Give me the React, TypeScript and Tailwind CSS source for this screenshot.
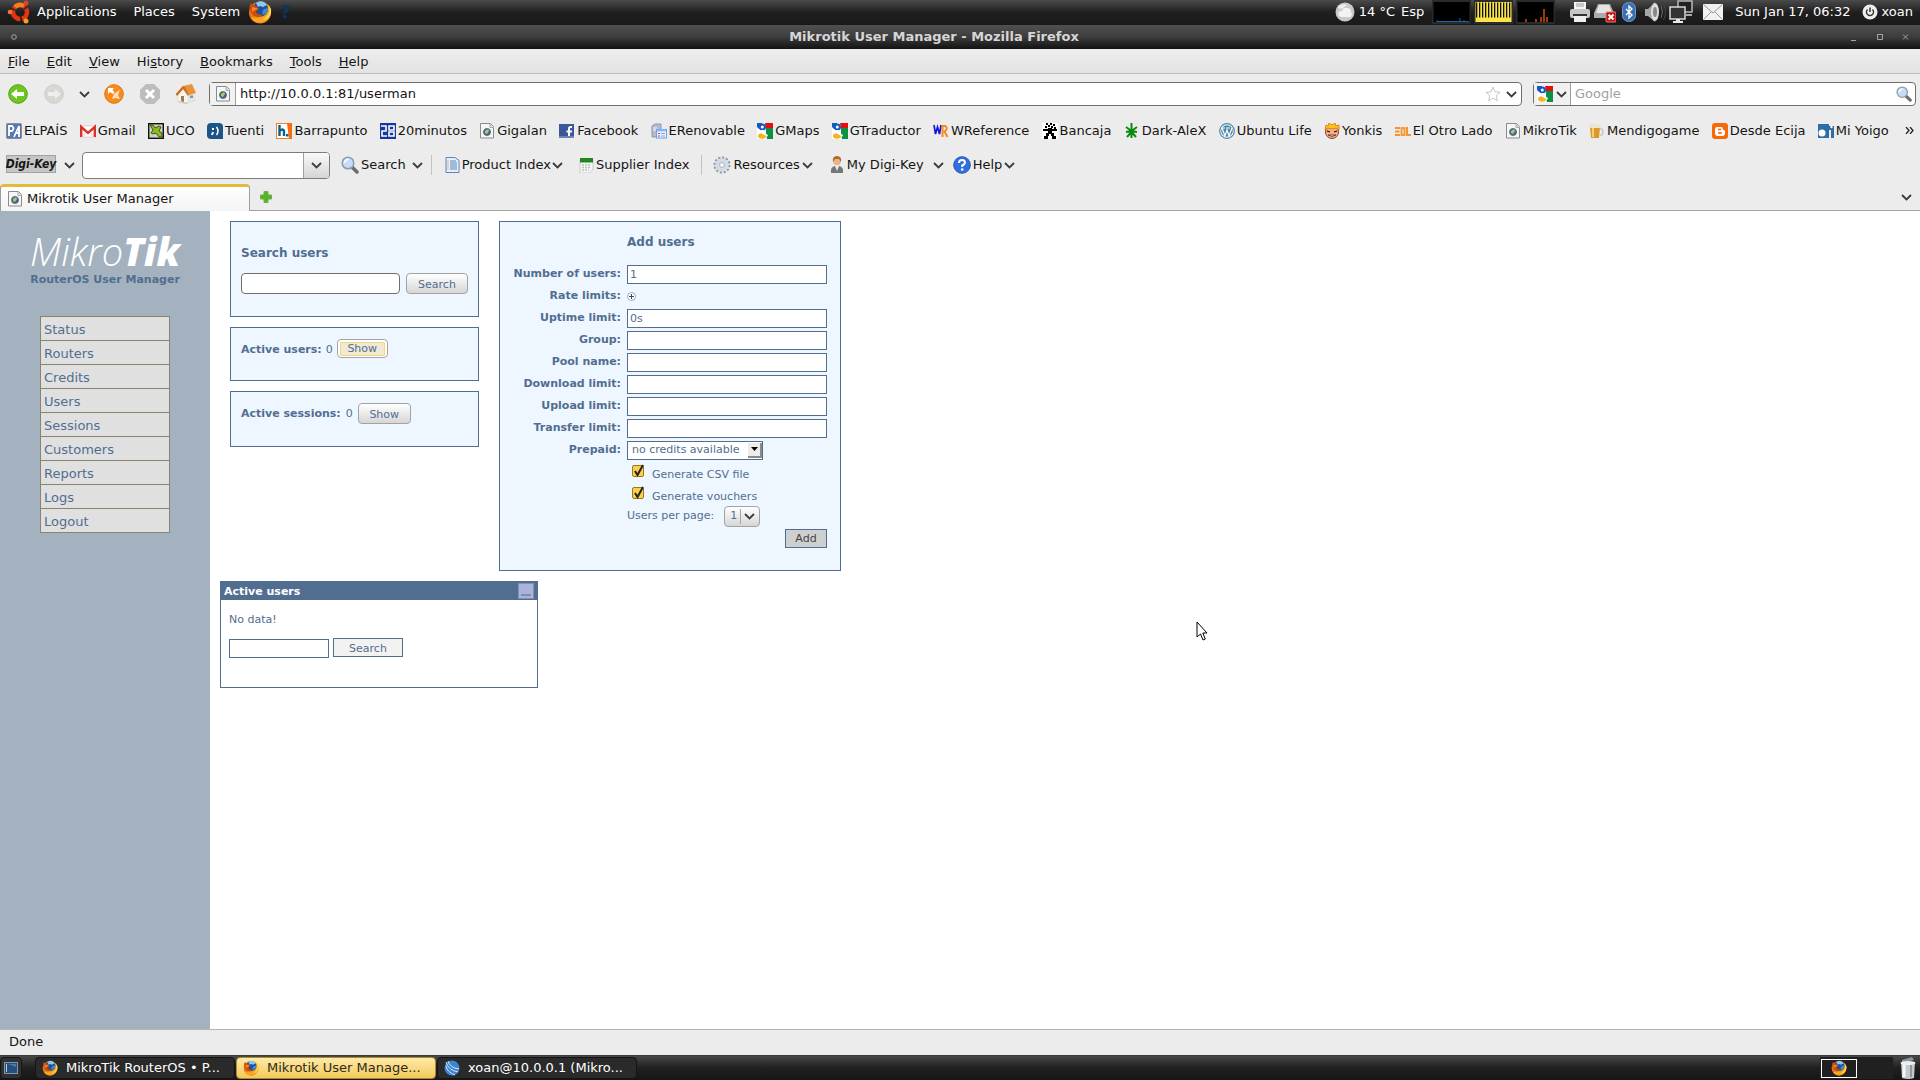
import type { ReactNode } from 'react'

const chevron = 'M1 1l4.5 4.5L10 1'

function Chevron({ className = '' }: { className?: string }) {
  return (
    <svg viewBox="0 0 11 7" className={`h-[7px] w-[11px] shrink-0 ${className}`} fill="none" stroke="#3c3c3c" strokeWidth="1.800">
      <path d={chevron} />
    </svg>
  )
}

function FirefoxIcon({ className = 'size-4' }: { className?: string }) {
  return (
    <svg viewBox="0 0 24 24" className={`shrink-0 ${className}`}>
      <circle cx="12" cy="12.500" r="11" fill="#e8781a" />
      <path d="M3 18a11 11 0 0 0 20-5c0-4-1-7-4-9 2 6 0 11-6 13-4 1-8 0-10 1z" fill="#f9a51b" />
      <path d="M20 4c3 6 1 13-6 16 6 0 10-5 9-11z" fill="#fddc55" />
      <circle cx="12.500" cy="9" r="7.500" fill="#1c4f9c" />
      <path d="M8 3c4-3 9-2 11 2l-4 2-3-1-2 1z" fill="#8cc8ee" />
      <path d="M16 9l4-1c0 4-2 6-5 7l-1-3z" fill="#3d8cd0" />
      <path d="M3 3c1 2 3 3 5 3l3 3-3 2c0 4 5 4 7 3-2 4-8 4-11 0C1 10 1 6 3 3z" fill="#cf4a0c" />
      <path d="M4 7l4 1 2 1-3 1-3 2z" fill="#f58a1f" />
    </svg>
  )
}

function PageIcon() {
  return (
    <svg viewBox="0 0 16 16" className="size-4 shrink-0">
      <path d="M1.500.5h10l3 3v11.500h-13z" fill="#f6f6f4" stroke="#8a8a88" />
      <path d="M11 .5v4h4" fill="#ddd" stroke="#aaa" />
      <circle cx="8" cy="9" r="3.500" fill="#3a62a4" stroke="#5c7186" />
      <path d="M6 8l3-2 1 2-2 3-2-1z" fill="#b9c75a" />
    </svg>
  )
}

function GoogleIcon() {
  return (
    <svg viewBox="0 0 16 16" className="size-4 shrink-0">
      <rect width="16" height="16" fill="#fff" />
      <path d="M8 0h8v5H9z" fill="#e90e0e" />
      <path d="M9 5h7v11h-6l-1-5z" fill="#0c9143" />
      <path d="M0 0h5v6H2L0 4z" fill="#1559c4" />
      <circle cx="5.500" cy="4" r="3.500" fill="#1559c4" />
      <ellipse cx="5" cy="13" rx="4" ry="2.800" fill="#f3b323" />
      <path d="M5 7c4 0 2 3 6 5l-1 2c-3-3-6-3-7-6z" fill="#fff" />
      <circle cx="5.300" cy="4" r="1.500" fill="#fff" />
    </svg>
  )
}

function Magnifier({ className = 'size-4' }: { className?: string }) {
  return (
    <svg viewBox="0 0 18 18" className={`shrink-0 ${className}`}>
      <path d="M11 11l5 5" stroke="#6d6d6d" strokeWidth="3.500" strokeLinecap="round" />
      <circle cx="7" cy="7" r="5.800" fill="#c7dcf5" stroke="#8f9bb0" strokeWidth="1.500" />
      <path d="M3.500 7a4 4 0 0 1 4-3.500" stroke="#fff" strokeWidth="1.500" fill="none" />
    </svg>
  )
}

function Svg16({ children }: { children: ReactNode }) {
  return (
    <svg viewBox="0 0 16 16" className="size-4 shrink-0">
      {children}
    </svg>
  )
}

const bookmarks: { name: string; icon: ReactNode }[] = [
  {
    name: 'ELPAÍS',
    icon: (
      <Svg16>
        <rect x=".5" y=".5" width="15" height="15" rx="1" fill="#5577b5" stroke="#8c8c8c" />
        <path d="M1 1h9L5 15H1z" fill="#5577b5" />
        <path d="M3 13V3h3q3 2 0 5H3" stroke="#fff" strokeWidth="1.800" fill="none" />
        <path d="M8 14l5-11v11M10 10h4" stroke="#fff" strokeWidth="1.800" fill="none" />
      </Svg16>
    ),
  },
  {
    name: 'Gmail',
    icon: (
      <Svg16>
        <rect y="3" width="16" height="11" fill="#fff" stroke="#e3a19c" strokeWidth=".5" />
        <path d="M1.200 14V4L8 10l6.800-6v10" stroke="#d8342c" strokeWidth="2.400" fill="none" />
        <path d="M2 14l4-5M14 14l-4-5" stroke="#eaa" strokeWidth=".8" />
      </Svg16>
    ),
  },
  {
    name: 'UCO',
    icon: (
      <Svg16>
        <rect x=".7" y=".7" width="14.600" height="14.600" fill="#cfd3c4" stroke="#111" strokeWidth="1.400" />
        <path d="M2 2h3l2 3 4-2 2 1-2 4 3 2v4h-3l-3-4-3 1-2-1 2-3z" fill="#8ebd1e" stroke="#24330b" strokeWidth=".8" />
      </Svg16>
    ),
  },
  {
    name: 'Tuenti',
    icon: (
      <Svg16>
        <rect width="16" height="16" rx="4" fill="#1b5687" />
        <rect x="10" y="10" width="6" height="6" fill="#1b5687" />
        <path d="M9.500 4q3 4 0 8" stroke="#fff" strokeWidth="1.500" fill="none" />
        <path d="M5 5h2v2H5zM5 9h2l-1 3H4z" fill="#fff" />
      </Svg16>
    ),
  },
  {
    name: 'Barrapunto',
    icon: (
      <Svg16>
        <rect x=".5" y=".5" width="15" height="15" fill="#fff" stroke="#f08030" />
        <path d="M11 0h5v16h-3z" fill="#f46f12" />
        <path d="M3.500 2v11M3.500 8q4-3 4.500 0v5" stroke="#0f5f80" strokeWidth="2.400" fill="none" />
        <rect x="10" y="11" width="2.500" height="2.500" fill="#0f5f80" />
      </Svg16>
    ),
  },
  {
    name: '20minutos',
    icon: (
      <Svg16>
        <rect width="16" height="16" fill="#14399a" />
        <path d="M1 3h5v5H2v5h5M9 3h5v4H9zM9 9h5v4H9z" stroke="#fff" strokeWidth="1.600" fill="none" />
      </Svg16>
    ),
  },
  { name: 'Gigalan', icon: <PageIcon /> },
  {
    name: 'Facebook',
    icon: (
      <Svg16>
        <rect y="1" width="15" height="14" fill="#3b5998" />
        <path d="M13 4h-1.500q-1.500 0-1.500 2v9M7.500 8.500H13" stroke="#fff" strokeWidth="2" fill="none" />
        <rect y="13" width="15" height="2" fill="#6d84b4" />
      </Svg16>
    ),
  },
  {
    name: 'ERenovable',
    icon: (
      <Svg16>
        <path d="M1 3l3-2h6v9l-3 4H1z" fill="#b4bccb" stroke="#8d98ab" />
        <path d="M2 5h4M2 7h4" stroke="#f2f4f8" />
        <rect x="5.500" y="6.500" width="10" height="8.500" fill="#eaf3ff" stroke="#6ba0ee" />
        <path d="M6 7.500h9" stroke="#8dbcff" strokeWidth="2" />
        <path d="M7 10.500h2M7 13h2" stroke="#e33" />
        <path d="M10 10.500h4M10 13h4" stroke="#79a6df" />
      </Svg16>
    ),
  },
  { name: 'GMaps', icon: <GoogleIcon /> },
  { name: 'GTraductor', icon: <GoogleIcon /> },
  {
    name: 'WReference',
    icon: (
      <Svg16>
        <path d="M1 2l1.500 9L4.500 4l2 7L8 2" stroke="#1717d8" strokeWidth="1.700" fill="none" />
        <path d="M9.500 14V3h3q3 3-1 5.500l3 5.500" stroke="#f68b1f" strokeWidth="2" fill="none" />
      </Svg16>
    ),
  },
  {
    name: 'Bancaja',
    icon: (
      <Svg16>
        <rect width="16" height="16" fill="#fff" />
        <path
          d="M4 0h2v2H4zM8 0h2v2H8zM11 1h2v2h-2zM6 2h2v2H6zM9 3h2v2H9zM3 3h2v2H3zM12 4h2v2h-2zM1 6h5v2H1zM10 6h5v2h-5zM6 5h4v6H6zM4 10h3v3H4zM9 10h3v3H9zM2 13h4v3H2zM10 13h4v3h-4z"
          fill="#000"
        />
      </Svg16>
    ),
  },
  {
    name: 'Dark-AleX',
    icon: (
      <Svg16>
        <path d="M7.500 0v15M7.500 8L2 4M7.500 8L13 4M7.500 8L2 9M7.500 8l5.500 1M7.500 9L3 14M7.500 9l4.500 5" stroke="#0c8a0c" strokeWidth="2" />
      </Svg16>
    ),
  },
  {
    name: 'Ubuntu Life',
    icon: (
      <Svg16>
        <circle cx="8" cy="8" r="7.300" fill="#fff" stroke="#4a86a8" strokeWidth="1.200" />
        <circle cx="8" cy="8" r="5.800" fill="#4a86a8" />
        <path d="M3 5l3 8 2-6 2 6 3-8M2 5h4M7 5h4" stroke="#fff" strokeWidth="1.200" fill="none" />
      </Svg16>
    ),
  },
  {
    name: 'Yonkis',
    icon: (
      <Svg16>
        <circle cx="8" cy="9" r="6.500" fill="#f0b48c" stroke="#8c3c1c" />
        <path d="M1 7l1-5 2 1 1-3 3 2 3-2 1 3 3-1v5l-3-2-4 1-4-1z" fill="#ffc61a" stroke="#e05a10" strokeWidth=".7" />
        <path d="M3 8l3 1M13 8l-3 1" stroke="#111" strokeWidth="1.300" />
        <path d="M4 12q4 3 8 0z" fill="#fff" stroke="#6a1f10" strokeWidth=".8" />
      </Svg16>
    ),
  },
  {
    name: 'El Otro Lado',
    icon: (
      <Svg16>
        <path d="M0 5h5M0 8.500h4.500M0 12h5" stroke="#f8932a" strokeWidth="2" />
        <rect x="6.500" y="5" width="3" height="7" stroke="#f8932a" strokeWidth="1.800" fill="none" />
        <path d="M12 4v8h4" stroke="#f8932a" strokeWidth="2" fill="none" />
      </Svg16>
    ),
  },
  { name: 'MikroTik', icon: <PageIcon /> },
  {
    name: 'Mendigogame',
    icon: (
      <Svg16>
        <path d="M11 6h2q2 3 0 6h-2" stroke="#c9c9c4" strokeWidth="1.500" fill="none" />
        <path d="M1 4h10l-1 11H2z" fill="#d99a2b" />
        <path d="M3 5h2v9H3z" fill="#f5cf74" />
        <path d="M0 2q3-2 6-1t6 1v3H0z" fill="#ede4cf" />
      </Svg16>
    ),
  },
  {
    name: 'Desde Ecija',
    icon: (
      <Svg16>
        <rect width="16" height="16" rx="3" fill="#f66a0a" />
        <path d="M5 4h4q2 0 2 3 2 0 2 1v2q0 3-3 3H6q-3 0-3-3V7q0-3 2-3z" fill="#fff" />
        <path d="M6 6.500h3M6 10h4" stroke="#f66a0a" strokeWidth="1.300" />
      </Svg16>
    ),
  },
  {
    name: 'Mi Yoigo',
    icon: (
      <Svg16>
        <path d="M0 1h11v14H0z" fill="#2f6ea3" />
        <circle cx="4" cy="10" r="3.500" fill="#fff" />
        <path d="M8 3h8v4h-3v8h3V7h-5z" fill="#2f6ea3" />
        <circle cx="13.500" cy="4" r="1.200" fill="#fff" />
      </Svg16>
    ),
  },
]

function TopPanel() {
  return (
    <header className="flex h-[25px] items-center bg-linear-to-b from-[#4b4b4b] via-[#1f1f1f] to-[#191919] pb-[2px] text-[13px] text-white">
      <svg viewBox="0 0 24 24" className="ml-[7px] size-6 shrink-0" fill="none">
        <circle cx="13" cy="12" r="7" stroke="#e2350e" strokeWidth="4.500" strokeDasharray="13 1.700" strokeDashoffset="4" />
        <path d="M8 7a7 7 0 0 1 9-1" stroke="#f4801e" strokeWidth="4.500" />
        <circle cx="3" cy="12" r="2.300" fill="#f3704a" />
        <circle cx="19" cy="3" r="2.500" fill="#d8462f" />
        <circle cx="19" cy="21" r="2.500" fill="#f99d1c" />
      </svg>
      <nav className="ml-[6px] flex gap-[17px]">
        <button>Applications</button>
        <button>Places</button>
        <button>System</button>
      </nav>
      <FirefoxIcon className="ml-2 size-6" />
      <span className="ml-2 text-lg/5 font-bold text-[#0c3560]">?</span>

      <div className="ml-auto flex items-center">
        <svg viewBox="0 0 20 20" className="size-5">
          <circle cx="10" cy="10" r="9.500" fill="#c9c9c9" />
          <path d="M4 14q-2-5 3-5 1-4 5-3 4 0 4 4 2 3-1 5H6z" fill="#f3f3f3" />
          <path d="M3 5q4-4 9-2l-4 3-3 1z" fill="#eee" />
        </svg>
        <span className="ml-1">14 °C</span>
        <span className="ml-[6px]">Esp</span>
        <svg viewBox="0 0 123 24" className="ml-2 h-6 w-[123px]">
          <path d="M0 0h39v24H0zM42 0h39v24H42zM84 0h39v24H84z" fill="#2b2b2b" />
          <path d="M1.500 2h36v20h-36zM85.500 2h36v20h-36z" fill="#000" />
          <path d="M5 22v-2M9 22v-1M13 22v-1M17 22v-1M21 22v-1M24 22v-1M28 22v-4M32 22v-2M36 22v-1M5 21.500h32" stroke="#1566a8" />
          <rect x="43.500" y="2" width="36" height="20" fill="#f9e547" />
          <path d="M44 10h36" stroke="#111" strokeWidth="15" strokeDasharray="1.300 1.700" />
          <path d="M94 22v-3M104 22v-3M109 22v-5M112 22V9M115 22v-5" stroke="#ee5a13" strokeWidth="1.300" />
        </svg>
        <svg viewBox="0 0 22 22" className="ml-[14px] size-[22px]">
          <path d="M5 1h12v8H5z" fill="#f4f4f4" />
          <path d="M7 3h8M7 5h8" stroke="#999" />
          <rect x="1" y="8" width="20" height="9" rx="2" fill="#c6c6c6" />
          <path d="M4 13h14v2H4z" fill="#333" />
          <path d="M5 15h12v6H5z" fill="#eee" />
        </svg>
        <svg viewBox="0 0 22 22" className="ml-[3px] size-[22px]">
          <path d="M4 3h12l4 9v5H0v-5z" fill="#aaa" />
          <path d="M5 4h10l3 8H2z" fill="#e5e5e5" />
          <rect x="12" y="11" width="10" height="10" rx="1" fill="#bf1010" stroke="#e77" />
          <path d="M14.500 13.500l5 5M19.500 13.500l-5 5" stroke="#fff" strokeWidth="2" />
        </svg>
        <svg viewBox="0 0 14 20" className="ml-[6px] h-5 w-[14px]">
          <rect x=".5" y=".5" width="13" height="19" rx="6" fill="#3b6fb2" stroke="#6f9bd1" />
          <path d="M4 7l6 6-3 3V4l3 3-6 6" stroke="#fff" strokeWidth="1.300" fill="none" />
        </svg>
        <svg viewBox="0 0 22 22" className="ml-2 size-[22px]">
          <path d="M1 8h3l7-7v20l-7-6H1z" fill="#a5a5a5" />
          <ellipse cx="11" cy="11" rx="4" ry="9" fill="#ddd" />
          <ellipse cx="11" cy="11" rx="2" ry="5" fill="#888" />
          <path d="M17 5q3 6 0 12" stroke="#666" fill="none" />
          <path d="M19.500 3q4 8 0 16" stroke="#444" fill="none" />
        </svg>
        <svg viewBox="0 0 24 24" className="ml-[3px] size-6">
          <rect x="9" y="1" width="14" height="11" fill="#222" stroke="#b9b9b9" strokeWidth="1.500" />
          <rect x="1" y="7" width="15" height="12" fill="#333" stroke="#d9d9d9" strokeWidth="1.500" />
          <path d="M7 19h4v2h3v2H4v-2h3z" fill="#e8e8e8" />
          <path d="M17 15h6" stroke="#aaa" strokeWidth="2" />
        </svg>
        <svg viewBox="0 0 20 16" className="ml-[10px] h-4 w-5">
          <rect width="20" height="16" rx="1" fill="#f1f1f1" />
          <path d="M1 1l9 8 9-8M1 15l7-7M19 15l-7-7" stroke="#999" fill="none" />
        </svg>
        <span className="ml-3">Sun Jan 17, 06:32</span>
        <svg viewBox="0 0 16 16" className="ml-[11px] size-4">
          <circle cx="8" cy="8" r="7.500" fill="#eee" />
          <path d="M5.500 5.500a3.500 3.500 0 1 0 5 0M8 3.500V8" stroke="#333" strokeWidth="1.500" fill="none" />
        </svg>
        <span className="mr-[7px] ml-1">xoan</span>
      </div>
    </header>
  )
}

function TitleBar() {
  return (
    <div className="flex h-6 items-center bg-linear-to-b from-[#505050] via-[#3d3d3d] to-[#131313] px-[11px] text-[13px] font-bold text-[#d6d6d6]">
      <svg viewBox="0 0 6 6" className="size-[6px]">
        <circle cx="3" cy="3" r="2.300" fill="none" stroke="#a5a5a5" />
      </svg>
      <h1 className="flex-1 text-center">Mikrotik User Manager - Mozilla Firefox</h1>
      <svg viewBox="0 0 58 8" className="h-2 w-[58px]" fill="none" stroke="#a5a5a5">
        <path d="M0 7.500h5M26.500 1.500h5v5h-5zM52 1.500l5 5M57 1.500l-5 5" />
      </svg>
    </div>
  )
}

function MenuBar() {
  return (
    <nav className="flex h-[25px] items-center gap-[17px] border-b border-[#bdbdbd] bg-linear-to-b from-[#eeeeee] to-[#e2e2e2] px-2 pt-px text-[13px]">
      <button><u>F</u>ile</button>
      <button><u>E</u>dit</button>
      <button><u>V</u>iew</button>
      <button>Hi<u>s</u>tory</button>
      <button><u>B</u>ookmarks</button>
      <button><u>T</u>ools</button>
      <button><u>H</u>elp</button>
    </nav>
  )
}

function NavBar() {
  return (
    <div className="flex h-10 items-center pr-1 pl-2 text-[13px]">
      <button aria-label="Back">
        <svg viewBox="0 0 20 20" className="size-5">
          <circle cx="10" cy="10" r="9.300" fill="#6cc81f" stroke="#4fa00f" />
          <path d="M3 10l6-5v3h7v4H9v3z" fill="#fff" />
        </svg>
      </button>
      <button aria-label="Forward" className="ml-4">
        <svg viewBox="0 0 20 20" className="size-5">
          <circle cx="10" cy="10" r="9.300" fill="#d6d8d4" stroke="#cbcdc9" />
          <path d="M17 10l-6-5v3H4v4h7v3z" fill="#eee" />
        </svg>
      </button>
      <button aria-label="History" className="ml-[15px]">
        <Chevron />
      </button>
      <button aria-label="Reload" className="ml-[14px]">
        <svg viewBox="0 0 20 20" className="size-5">
          <circle cx="10" cy="10" r="9.300" fill="#f98b1b" stroke="#e0730c" />
          <path d="M4 4h6L8.500 6l2 2.500L9 10 6 8l-2 2z" fill="#fff" />
          <path d="M10 10l2-1.500 4-3-2 5.500 2 4-5-1-3 1z" fill="#fde3c6" />
        </svg>
      </button>
      <button aria-label="Stop" className="ml-[15px]">
        <svg viewBox="0 0 22 22" className="size-[22px]">
          <path d="M7 1h8l6 6v8l-6 6H7l-6-6V7z" fill="#bebcbc" />
          <path d="M7 7l8 8M15 7l-8 8" stroke="#fff" strokeWidth="3" />
        </svg>
      </button>
      <button aria-label="Home" className="ml-[14px]">
        <svg viewBox="0 0 22 22" className="size-[22px]">
          <path d="M2 19l9 2 10-4-8-3z" fill="#c4c4c0" />
          <path d="M3 10l5-4 5 6v8l-10-2z" fill="#f6f5ef" stroke="#d0cfc8" strokeWidth=".5" />
          <path d="M13 11l7-2v8l-7 3z" fill="#e6e4dc" />
          <path d="M1 11l7-8 1 2-7 8z" fill="#b85c14" />
          <path d="M8 3l9-2 4 9-7 2z" fill="#e8943c" />
          <path d="M8 3l2 1 4 8-1 1-5-7-6 6-1-1z" fill="#d3701c" />
          <path d="M6 13h3v6l-3-1z" fill="#9b7c50" />
          <rect x="15" y="12.500" width="3" height="2.500" fill="#7796bd" />
        </svg>
      </button>

      <div className="ml-3 flex h-6 flex-1 items-center rounded-sm border border-[#6f6f6f] bg-white pr-1">
        <div className="flex h-[22px] w-[26px] items-center justify-center border-r border-[#9c9c9c] bg-[#f1f1f1]">
          <PageIcon />
        </div>
        <input aria-label="Location" defaultValue="http://10.0.0.1:81/userman" className="ml-1 min-w-0 flex-1 outline-none" />
        <svg viewBox="0 0 16 16" className="mr-[5px] size-4">
          <path d="M8 1l2 4.800 5 .5-3.800 3.400 1.200 5.100L8 12.200l-4.400 2.600 1.200-5.100L1 6.300l5-.5z" fill="#fff" stroke="#c6c6c6" />
        </svg>
        <Chevron />
      </div>
      <div className="ml-[11px] flex h-6 w-[383px] items-center rounded-sm border border-[#6f6f6f] bg-white pr-[3px]">
        <div className="flex h-[22px] items-center gap-[3px] border-r border-[#9c9c9c] bg-[#f1f1f1] px-[3px]">
          <GoogleIcon />
          <Chevron />
        </div>
        <input aria-label="Search the web" placeholder="Google" className="ml-1 min-w-0 flex-1 outline-none placeholder:text-[#9f9f9f]" />
        <Magnifier />
      </div>
    </div>
  )
}

function BookmarksBar() {
  return (
    <nav className="flex h-8 items-center justify-between px-[6px] pt-px text-[13px] whitespace-nowrap">
      {bookmarks.map((b) => (
        <a key={b.name} href="#" className="flex items-center gap-[2px]">
          {b.icon}
          {b.name}
        </a>
      ))}
      <svg viewBox="0 0 9 7" className="ml-1 h-[7px] w-[9px]" fill="none" stroke="#222" strokeWidth="1.300">
        <path d="M1 0l3 3.500L1 7M5 0l3 3.500L5 7" />
      </svg>
    </nav>
  )
}

function DigiKeyBar() {
  return (
    <div className="flex h-[38px] items-center pl-[6px] text-[13px] whitespace-nowrap">
      <div className="mb-[2px] flex h-[18px] w-[50px] items-center justify-center border border-[#a3a3a3] bg-[#c6c6c6] font-['DejaVu_Sans_Condensed','DejaVu_Sans',sans-serif] text-[12px] font-bold text-[#161616] italic">
        Digi-Key
      </div>
      <Chevron className="ml-2" />
      <div className="ml-[7px] flex h-[27px] w-[248px] overflow-hidden rounded-sm border border-[#7c7c7c] bg-white">
        <input aria-label="Digi-Key part search" className="min-w-0 flex-1 px-1 outline-none" />
        <button aria-label="Recent searches" className="flex w-[26px] items-center justify-center border-l border-[#a0a0a0] bg-linear-to-b from-[#fafafa] to-[#d4d4d4]">
          <Chevron />
        </button>
      </div>
      <button className="ml-[11px] flex items-center gap-[2px]">
        <Magnifier className="size-[18px]" />
        Search
        <Chevron className="ml-1" />
      </button>
      <div className="ml-2 h-5 w-px bg-[#c2c2c2]" />
      <button className="ml-[13px] flex items-center gap-px">
        <Svg16>
          <path d="M1 .5h9l4 3v12H1z" fill="#e6effa" stroke="#5b86b8" />
          <path d="M5 4h6M5 6h7M5 8h7M5 10h7M5 12h7" stroke="#5b86b8" />
          <path d="M2.500 4h1M2.500 6h1M2.500 8h1M2.500 10h1M2.500 12h1" stroke="#e07a2c" strokeWidth="1.200" />
        </Svg16>
        Product Index
        <Chevron />
      </button>
      <button className="ml-4 flex items-center gap-px">
        <Svg16>
          <path d="M1 3h13v9l-3 4H1z" fill="#f6f6f6" stroke="#bbb" strokeWidth=".7" />
          <rect x="1" y="1" width="13" height="4.500" fill="#1a8a1a" />
          <path d="M3 8h9M3 10.500h9M3 13h7" stroke="#b9c4b9" strokeDasharray="2 1" strokeWidth="1.300" />
        </Svg16>
        Supplier Index
      </button>
      <div className="ml-3 h-5 w-px bg-[#c2c2c2]" />
      <button className="ml-[11px] flex items-center gap-[2px]">
        <svg viewBox="0 0 18 18" className="size-[18px]">
          <circle cx="9" cy="9" r="7.300" fill="none" stroke="#8e99ab" strokeWidth="2.500" strokeDasharray="2.200 1.600" />
          <circle cx="9" cy="9" r="4.800" fill="none" stroke="#d5dbe5" strokeWidth="4" />
          <circle cx="9" cy="9" r="2.500" fill="#f4f6fa" stroke="#9aa5b8" strokeWidth=".8" />
        </svg>
        Resources
        <Chevron />
      </button>
      <button className="ml-4 flex items-center gap-[2px]">
        <svg viewBox="0 0 16 18" className="h-[18px] w-4">
          <path d="M2 17q-1-6 4-7h4q5 1 4 7z" fill="#777" />
          <path d="M6 10l2 5 2-5z" fill="#eee" />
          <circle cx="8" cy="5.500" r="3.800" fill="#eab58a" />
          <path d="M4 6q-1-6 4-6t4 6l-2-3H6z" fill="#b06a1f" />
        </svg>
        My Digi-Key
        <Chevron className="ml-[7px]" />
      </button>
      <button className="ml-[9px] flex items-center gap-[2px]">
        <svg viewBox="0 0 18 18" className="size-[18px]">
          <circle cx="9" cy="9" r="8.300" fill="#2f6fe0" stroke="#2254b5" />
          <path d="M6 7q0-3 3-3t3 2.500Q12 8 9.200 9.500V11" stroke="#fff" strokeWidth="2" fill="none" />
          <circle cx="9.200" cy="13.500" r="1.300" fill="#fff" />
        </svg>
        Help
        <Chevron />
      </button>
    </div>
  )
}

function TabStrip() {
  return (
    <div className="flex h-[27px] items-center border-b border-[#a2a2a2] pr-2 text-[13px]">
      <div className="-mb-px flex h-[27px] w-[250px] items-center gap-1 rounded-t-sm border-x border-t-3 border-x-[#9d9d9d] border-t-[#e5b93a] bg-linear-to-b from-white to-[#f4f4f4] pl-[6px]">
        <PageIcon />
        Mikrotik User Manager
      </div>
      <button aria-label="New tab" className="ml-[10px]">
        <svg viewBox="0 0 12 12" className="size-3">
          <path d="M4 .5h4V4h3.500v4H8v3.500H4V8H.5V4H4z" fill="#55b520" stroke="#6fae50" />
        </svg>
      </button>
      <button aria-label="List all tabs" className="ml-auto">
        <Chevron />
      </button>
    </div>
  )
}

const menu = ['Status', 'Routers', 'Credits', 'Users', 'Sessions', 'Customers', 'Reports', 'Logs', 'Logout']

function Sidebar() {
  return (
    <aside className="w-[210px] shrink-0 bg-[#a3b2be] pt-5">
      <div className="text-center font-['Open_Sans',sans-serif] text-[38px]/[40px] whitespace-nowrap text-white italic">
        <span className="font-light">Mikro</span>
        <span className="font-extrabold">Tik</span>
      </div>
      <p className="mt-[2px] text-center font-bold">RouterOS User Manager</p>
      <nav className="mx-10 mt-[29px] border-x border-t border-[#86866f] bg-[#e0e0e0] text-[13px]">
        {menu.map((item) => (
          <a key={item} href="#" className="flex h-6 items-center border-b border-[#86866f] pt-[2px] pl-[3px]">
            {item}
          </a>
        ))}
      </nav>
    </aside>
  )
}

const panel = 'border border-[#516e90] bg-[#eef7ff]'
const softButton = 'rounded-sm border border-[#a3a3a3] bg-linear-to-b from-white to-[#d6d6d6] text-center'
const field = 'h-[19px] border border-[#516e90] bg-white px-[2px] outline-none'

function SearchColumn() {
  return (
    <div className="flex w-[249px] flex-col gap-[10px]">
      <section className={`${panel} h-24 px-[10px] pt-[22px]`}>
        <h2 className="text-[12px]/[18px] font-bold">Search users</h2>
        <div className="mt-[11px] flex gap-[6px]">
          <input aria-label="Search users" className="h-[21px] min-w-0 flex-1 rounded-sm border border-[#6f6f6f] bg-white px-1 outline-none" />
          <button className={`${softButton} h-[21px] w-[62px] pt-[2px]`}>Search</button>
        </div>
      </section>
      <section className={`${panel} flex h-[54px] items-start gap-1 px-[10px] pt-[11px]`}>
        <b className="leading-[21px]">Active users:</b>
        <span className="leading-[21px]">0</span>
        <button className="h-[19px] w-[51px] rounded-sm border border-[#a3a3a3] bg-white p-[2px]">
          <span className="block rounded-[1px] border border-[#f5d47a] bg-[#efe9d6] leading-[12px]">Show</span>
        </button>
      </section>
      <section className={`${panel} flex h-14 items-start gap-[5px] px-[10px] pt-[11px]`}>
        <b className="leading-[22px]">Active sessions:</b>
        <span className="leading-[22px]">0</span>
        <button className={`${softButton} h-[21px] w-[53px] pt-[2px]`}>Show</button>
      </section>
    </div>
  )
}

const limits = ['Group', 'Pool name', 'Download limit', 'Upload limit', 'Transfer limit']

function Field({ label, value }: { label: string; value?: string }) {
  return (
    <>
      <label htmlFor={label} className="text-right font-bold">
        {label}:
      </label>
      <input id={label} defaultValue={value} className={`${field} w-[200px]`} />
    </>
  )
}

function Check({ label }: { label: string }) {
  return (
    <label className="col-start-2 flex h-[22px] items-end gap-2 pl-[5px]">
      <span className="relative mb-[6px] block h-3 w-3">
        <input type="checkbox" defaultChecked className="block size-3 appearance-none rounded-[2px] border border-[#9a7a1c] bg-[#fbd04a]" />
        <svg viewBox="0 0 14 14" className="pointer-events-none absolute -top-px left-0 size-[14px]">
          <path d="M3 7l2.500 4L11 1" stroke="#222" strokeWidth="2" fill="none" />
        </svg>
      </span>
      <span className="mb-px">{label}</span>
    </label>
  )
}

function AddUsers() {
  return (
    <section className={`${panel} h-[350px] w-[342px] pr-[13px]`}>
      <form onSubmit={(e) => e.preventDefault()}>
        <h2 className="ml-auto w-[200px] pt-[11px] pb-3 text-[12px]/[18px] font-bold">Add users</h2>
        <div className="grid auto-rows-[22px] grid-cols-[1fr_200px] items-center gap-x-[6px]">
          <Field label="Number of users" value="1" />
          <span className="text-right font-bold">Rate limits:</span>
          <button type="button" aria-label="Show rate limits" className="w-[9px]">
            <svg viewBox="0 0 9 9" className="size-[9px]" fill="none">
              <circle cx="4.500" cy="4.500" r="4" fill="#fff" stroke="#9aa9ba" />
              <path d="M4.500 2v5M2 4.500h5" stroke="#2d4a6b" />
            </svg>
          </button>
          <Field label="Uptime limit" value="0s" />
          {limits.map((label) => (
            <Field key={label} label={label} />
          ))}
          <label htmlFor="prepaid" className="text-right font-bold">
            Prepaid:
          </label>
          <div className="relative w-[136px]">
            <select id="prepaid" className="block h-[19px] w-full appearance-none border border-[#516e90] bg-white pl-1 outline-none">
              <option>no credits available</option>
            </select>
            <span className="pointer-events-none absolute top-[2px] right-px flex h-[15px] w-[14px] items-center justify-center border-r-2 border-b-2 border-[#8a8a8a] bg-[#ececec]">
              <svg viewBox="0 0 7 4" className="h-1 w-[7px]">
                <path d="M0 0h7L3.500 4z" fill="#000" />
              </svg>
            </span>
          </div>
          <Check label="Generate CSV file" />
          <Check label="Generate vouchers" />
          <div className="col-start-2 flex items-center gap-[10px]">
            <label htmlFor="per-page">Users per page:</label>
            <div className="relative w-9">
              <select id="per-page" className={`${softButton} block h-[21px] w-full appearance-none pl-[5px] text-left outline-none`}>
                <option>1</option>
              </select>
              <span className="pointer-events-none absolute top-[3px] right-[5px] flex h-[15px] items-center border-l border-[#a3a3a3] pl-[3px]">
                <Chevron />
              </span>
            </div>
          </div>
        </div>
        <button className="mt-[2px] ml-auto block h-[19px] w-[42px] border border-[#516e90] bg-[#cfcfcf] text-[#444]">Add</button>
      </form>
    </section>
  )
}

function ActiveUsers() {
  return (
    <section className="mt-[10px] h-[107px] w-[318px] border border-[#516e90]">
      <div className="flex h-[18px] items-center justify-between bg-[#516e90] px-[3px]">
        <h2 className="pt-px font-bold text-white">Active users</h2>
        <button aria-label="Minimize" className="flex size-4 items-end justify-center border border-[#8290b5] bg-[#aab4d8] pb-[2px]">
          <span className="h-[2px] w-[10px] bg-[#7f8db0]" />
        </button>
      </div>
      <div className="px-2 pt-3">
        <p className="leading-[16px]">No data!</p>
        <div className="mt-[10px] flex gap-1">
          <input aria-label="Search active users" className={`${field} mt-px w-[100px]`} />
          <button className="h-[19px] w-[70px] border border-[#516e90] bg-[#f2f2f2] pt-[3px]">Search</button>
        </div>
      </div>
    </section>
  )
}

function StatusBar() {
  return (
    <div className="flex h-[26px] items-center border-t border-[#b5b5b5] bg-[#ececec] pb-[2px] pl-[9px] text-[13px]">Done</div>
  )
}

function Taskbar() {
  const task = 'flex h-full w-[200px] items-center gap-2 rounded-sm border px-[6px]'
  return (
    <footer className="flex h-[25px] items-center gap-px border-t border-[#3c3c3c] bg-linear-to-b from-[#484848] via-[#202020] to-[#161616] py-px text-[13px] text-white">
      <button aria-label="Show desktop" className="mr-3 flex h-full w-[22px] items-center justify-center rounded-sm border border-[#161616] bg-[#303030]">
        <svg viewBox="0 0 14 12" className="h-3 w-[14px]">
          <rect x=".5" y=".5" width="13" height="11" fill="#24507f" stroke="#8496a8" />
          <path d="M2.500 2v8" stroke="#b8c9dc" />
          <path d="M4 2h8v3z" fill="#4d7aa8" />
        </svg>
      </button>
      <button className={`${task} border-[#141414] bg-[#2a2a2a]`}>
        <FirefoxIcon />
        MikroTik RouterOS • P...
      </button>
      <button className={`${task} border-[#a88a32] bg-linear-to-b from-[#ffeaa6] to-[#f3ca58] text-[#2f2a18]`}>
        <FirefoxIcon />
        Mikrotik User Manage...
      </button>
      <button className={`${task} border-[#141414] bg-[#2a2a2a]`}>
        <svg viewBox="0 0 16 16" className="size-4">
          <circle cx="8" cy="8" r="7.500" fill="#3c85cf" />
          <path d="M2 2q2 8 12 10M4 1q2 7 11 8M2 6q1 6 9 9" stroke="#d5e8fa" fill="none" />
        </svg>
        xoan@10.0.0.1 (Mikro...
      </button>
      <div className="mr-[6px] ml-auto flex h-full w-[73px] items-center bg-[#202020] pl-px">
        <div className="flex h-[19px] w-9 items-center justify-center border border-white">
          <FirefoxIcon />
        </div>
      </div>
      <svg viewBox="0 0 16 22" className="mr-1 h-[22px] w-4">
        <path d="M1 5h14l-1 16q-6 2-12 0z" fill="#c3c9cf" />
        <path d="M4 7v13" stroke="#f4f6f8" strokeWidth="3" />
        <path d="M11 8v12" stroke="#8e969e" strokeWidth="2" />
        <path d="M2 3l10-3 2 3-12 3z" fill="#8b939b" />
        <ellipse cx="8" cy="6" rx="7.500" ry="2" fill="#eceff2" />
      </svg>
    </footer>
  )
}

export default function App() {
  return (
    <div className="flex min-h-screen flex-col bg-[#ececec] font-['DejaVu_Sans',sans-serif] text-[#141414]">
      <TopPanel />
      <TitleBar />
      <MenuBar />
      <NavBar />
      <BookmarksBar />
      <DigiKeyBar />
      <TabStrip />
      <div className="relative flex flex-1 bg-white text-[11px]/[14px] text-[#516e90]">
        <Sidebar />
        <main className="pt-[10px] pl-[10px]">
          <div className="flex items-start gap-5 pl-[10px]">
            <SearchColumn />
            <AddUsers />
          </div>
          <ActiveUsers />
        </main>
        <svg viewBox="0 0 12 20" className="pointer-events-none absolute top-[410px] left-[1196px] h-5 w-3">
          <path d="M1 1v15l3.500-3 2.500 6 2.300-1-2.500-6H11z" fill="#fff" stroke="#000" />
        </svg>
      </div>
      <StatusBar />
      <Taskbar />
    </div>
  )
}
